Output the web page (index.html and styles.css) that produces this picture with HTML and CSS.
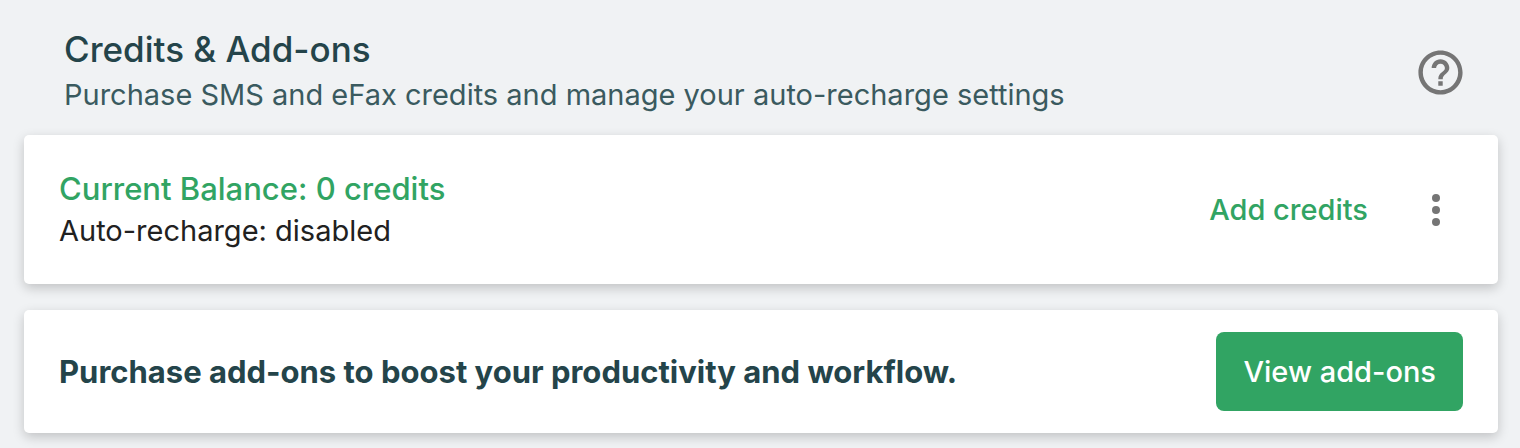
FILE: index.html
```html
<!DOCTYPE html>
<html lang="en">
<head>
    <meta charset="UTF-8">
    <meta name="viewport" content="width=device-width, initial-scale=1.0">
    <title>Credits &amp; Add-ons</title>
    <link rel="stylesheet" href="styles.css">
</head>
<body>
    <header class="page-header">
        <div>
            <h1>Credits &amp; Add-ons</h1>
            <p class="subtitle">Purchase SMS and eFax credits and manage your auto-recharge settings</p>
        </div>
        <button class="icon-button" type="button" aria-label="Help">
            <svg width="53" height="53" viewBox="0 0 24 24" fill="currentColor">
                <path d="M11 18h2v-2h-2v2zm1-16C6.48 2 2 6.48 2 12s4.480 10 10 10 10-4.480 10-10S17.520 2 12 2zm0 18c-4.410 0-8-3.590-8-8s3.590-8 8-8 8 3.590 8 8-3.590 8-8 8zm0-14c-2.210 0-4 1.790-4 4h2c0-1.100.9-2 2-2s2 .9 2 2c0 2-3 1.750-3 5h2c0-2.250 3-2.500 3-5 0-2.210-1.790-4-4-4z"/>
            </svg>
        </button>
    </header>

    <main>
        <section class="card balance-card">
            <div>
                <h2 class="balance">Current Balance: 0 credits</h2>
                <p class="recharge">Auto-recharge: disabled</p>
            </div>
            <div class="actions">
                <button class="text-button" type="button">Add credits</button>
                <button class="icon-button" type="button" aria-label="More options">
                    <svg width="48" height="48" viewBox="0 0 24 24" fill="currentColor">
                        <circle cx="12" cy="6" r="2"/>
                        <circle cx="12" cy="12" r="2"/>
                        <circle cx="12" cy="18" r="2"/>
                    </svg>
                </button>
            </div>
        </section>

        <section class="card addons-card">
            <h2 class="addons-title">Purchase add-ons to boost your productivity and workflow.</h2>
            <button class="primary-button" type="button">View add-ons</button>
        </section>
    </main>
</body>
</html>
```
FILE: styles.css
```css
* {
    box-sizing: border-box;
}
body {
    font-family: Inter, sans-serif;
    margin: 0;
    padding: 27px 22px 15px 24px;
    background-color: #f0f2f4;
}
h1, h2, p {
    margin: 0;
}
button {
    font-family: inherit;
    border: none;
    cursor: pointer;
}
.page-header {
    display: flex;
    align-items: center;
    justify-content: space-between;
    padding: 0 31px 17px 40px;
}
h1 {
    color: #24444a;
    font-size: 35px;
    line-height: 44px;
    font-weight: 500;
}
.subtitle {
    color: #3a5a5f;
    font-size: 29px;
    line-height: 47px;
}
.card {
    display: flex;
    align-items: center;
    justify-content: space-between;
    background-color: white;
    border-radius: 5px;
    padding: 22px 35px;
    box-shadow: 0 4px 12px rgba(0,0,0,0.2);
}
.balance-card {
    min-height: 149px;
    margin-bottom: 26px;
}
.balance {
    color: #31a463;
    font-size: 31px;
    line-height: 42px;
    font-weight: 500;
}
.recharge {
    color: #212121;
    font-size: 29px;
    line-height: 42px;
}
.actions {
    display: flex;
    align-items: center;
    gap: 44px;
    padding-right: 3px;
}
.text-button {
    background: none;
    color: #31a463;
    padding: 0;
    font-size: 29px;
    font-weight: 500;
}
.icon-button {
    display: flex;
    background: none;
    color: #757575;
    padding: 0;
}
.addons-title {
    color: #24444a;
    font-size: 31px;
    line-height: 42px;
    font-weight: 700;
}
.primary-button {
    background-color: #31a463;
    color: white;
    border-radius: 8px;
    padding: 18px 27px;
    font-size: 29px;
    line-height: 43px;
    font-weight: 500;
}
.primary-button:hover {
    background-color: #2a9157;
}
```
